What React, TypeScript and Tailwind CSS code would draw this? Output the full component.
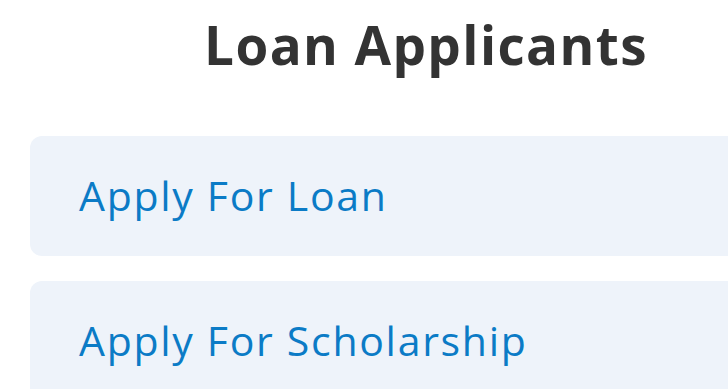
import React from 'react';

const options = ['Apply For Loan', 'Apply For Scholarship'];

export default function App() {
  return (
    <div className="w-[728px] h-[389px] overflow-hidden bg-white" style={{ fontFamily: '"Open Sans", "Noto Sans", sans-serif' }}>
      <div className="w-[852px] px-[30px]">
        <h1 className="h-[96px] pt-[10px] text-center text-[53px] leading-[70px] font-bold text-[#333333] tracking-[1.4px]">
          Loan Applicants
        </h1>
        <div className="mt-[40px] flex flex-col gap-[25px]">
          {options.map((label) => (
            <div
              key={label}
              className="h-[120px] rounded-[12px] bg-[#eef3fa] pl-[49px] flex items-center"
            >
              <span className="text-[41px] leading-none text-[#0b7bc6] tracking-[1.7px] pb-[2px]">{label}</span>
            </div>
          ))}
        </div>
      </div>
    </div>
  );
}
